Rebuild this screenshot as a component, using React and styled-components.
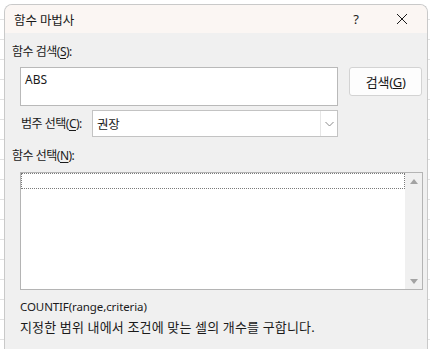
import React from "react";
import styled, { createGlobalStyle } from "styled-components";

const GlobalStyle = createGlobalStyle`
  html, body {
    margin: 0;
    height: 100%;
    overflow: hidden;
  }
  body {
    background-color: #ffffff;
    background-image:
      repeating-linear-gradient(to bottom, transparent 0 19px, #e2e2e2 19px 20px);
    font-family: "Noto Sans", "Noto Sans CJK KR", sans-serif;
  }
`;

const Page = styled.div`
  padding: 4px 2px 0 4px;
  height: 349px;
  box-sizing: border-box;
`;

const Window = styled.div`
  display: flex;
  flex-direction: column;
  height: 360px;
  background-color: #f0f0f0;
  border: 1px solid #c9c9c9;
  border-bottom: none;
  border-radius: 8px 8px 0 0;
  overflow: hidden;
  color: #1a1a1a;
  font-size: 12px;
`;

const TitleBar = styled.div`
  display: flex;
  align-items: center;
  height: 28px;
  padding-left: 9px;
  background-color: #fbf6f3;
`;

const Title = styled.span`
  flex: 1;
  font-size: 12.5px;
  letter-spacing: -0.1px;
`;

const TitleButton = styled.span`
  display: flex;
  align-items: center;
  justify-content: center;
  width: 46px;
  height: 28px;
  font-size: 13px;
  margin-right: ${(p) => p.$gap || 0}px;
`;

const Body = styled.div`
  display: flex;
  flex-direction: column;
  padding: 0 5px 0 7px;
`;

const Label = styled.div`
  flex: none;
  margin-top: ${(p) => p.$top || 0}px;
  width: ${(p) => (p.$width ? `${p.$width}px` : "auto")};
  height: 18px;
  line-height: 18px;
  letter-spacing: -0.5px;
  white-space: nowrap;
  u {
    text-underline-offset: 2px;
  }
`;

const SearchRow = styled.div`
  display: flex;
  align-items: flex-start;
  margin-top: 6px;
  padding-left: 8px;
  gap: 11px;
`;

const SearchInput = styled.div`
  width: 310px;
  height: 29px;
  background-color: #ffffff;
  border: 1px solid #b9b9b9;
  padding: 5px 4px 3px;
  font-size: 12px;
  line-height: 14px;
`;

const Button = styled.div`
  display: flex;
  align-items: center;
  justify-content: center;
  width: 71px;
  height: 27px;
  background-color: #fdfdfd;
  border: 1px solid #d3d3d3;
  border-radius: 3px;
  font-size: 13px;
  letter-spacing: -0.3px;
`;

const CategoryRow = styled.div`
  display: flex;
  align-items: center;
  margin-top: 4px;
  padding-left: 9px;
  gap: 3px;
`;

const Select = styled.div`
  display: flex;
  width: 244px;
  height: 25px;
  background-color: #ffffff;
  border: 1px solid #c3c3c3;
`;

const SelectValue = styled.div`
  flex: 1;
  display: flex;
  align-items: center;
  padding-left: 4px;
  font-size: 12.5px;
  letter-spacing: -0.3px;
`;

const SelectArrow = styled.div`
  display: flex;
  align-items: center;
  justify-content: center;
  width: 16px;
  border-left: 1px solid #e6e6e6;
`;

const ListBox = styled.div`
  display: flex;
  margin-top: 7px;
  margin-left: 8px;
  width: 401px;
  height: 116px;
  background-color: #ffffff;
  border: 1px solid #b4b4b4;
`;

const ListItems = styled.div`
  flex: 1;
`;

const FocusItem = styled.div`
  height: 14px;
  border: 1px dotted #7a7a7a;
`;

const ScrollBar = styled.div`
  display: flex;
  flex-direction: column;
  justify-content: space-between;
  align-items: center;
  width: 17px;
  padding: 6px 0 5px;
  box-sizing: border-box;
  background-color: #f0f0f0;
`;

const Caret = styled.span`
  width: 0;
  height: 0;
  border-left: 4px solid transparent;
  border-right: 4px solid transparent;
  ${(p) =>
    p.$up
      ? "border-bottom: 5px solid #a3a3a3;"
      : "border-top: 5px solid #a3a3a3;"}
`;

const Syntax = styled.div`
  margin-top: 8px;
  margin-left: 8px;
  height: 18px;
  line-height: 18px;
  font-size: 11.5px;
  letter-spacing: -0.1px;
`;

const Description = styled.div`
  margin-top: 2px;
  margin-left: 8px;
  line-height: 18px;
  font-size: 13px;
  letter-spacing: 0.15px;
`;

const App = () => (
  <>
    <GlobalStyle />
    <Page>
      <Window>
        <TitleBar>
          <Title>함수 마법사</Title>
          <TitleButton>?</TitleButton>
          <TitleButton $gap={2}>
            <svg width="12" height="12" viewBox="0 0 12 12">
              <path d="M1 1 L11 11 M11 1 L1 11" stroke="#1a1a1a" strokeWidth="1" />
            </svg>
          </TitleButton>
        </TitleBar>
        <Body>
          <Label $top={10}>
            함수 검색(<u>S</u>):
          </Label>
          <SearchRow>
            <SearchInput>ABS</SearchInput>
            <Button>
              검색(<u>G</u>)
            </Button>
          </SearchRow>
          <CategoryRow>
            <Label $width={68}>
              범주 선택(<u>C</u>):
            </Label>
            <Select>
              <SelectValue>권장</SelectValue>
              <SelectArrow>
                <svg width="9" height="6" viewBox="0 0 9 6">
                  <path d="M0.5 1 L4.5 5 L8.5 1" fill="none" stroke="#8a8a8a" strokeWidth="1" />
                </svg>
              </SelectArrow>
            </Select>
          </CategoryRow>
          <Label $top={10}>
            함수 선택(<u>N</u>):
          </Label>
          <ListBox>
            <ListItems>
              <FocusItem />
            </ListItems>
            <ScrollBar>
              <Caret $up />
              <Caret />
            </ScrollBar>
          </ListBox>
          <Syntax>COUNTIF(range,criteria)</Syntax>
          <Description>지정한 범위 내에서 조건에 맞는 셀의 개수를 구합니다.</Description>
        </Body>
      </Window>
    </Page>
  </>
);

export default App;
